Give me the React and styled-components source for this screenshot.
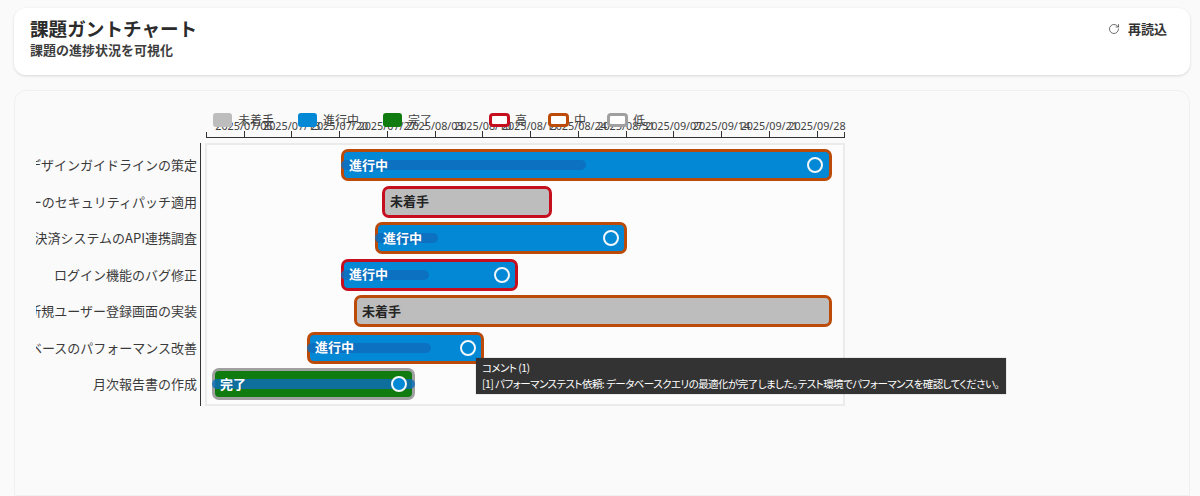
import styled, { createGlobalStyle } from 'styled-components'
import { RotateCw } from 'lucide-react'

const JP = `'Noto Sans CJK JP', 'Noto Sans', sans-serif`

const GlobalStyle = createGlobalStyle`
    html, body {
        margin: 0;
        height: 100%;
        overflow: hidden;
        background: #fafafa;
        font-family: ${JP};
        color: #242424;
    }
`

const Page = styled.div`
    height: 496px;
    padding: 8px 10px 0 14px;
    box-sizing: border-box;
    display: flex;
    flex-direction: column;
    gap: 15px;
`

const Header = styled.header`
    flex: 0 0 67px;
    box-sizing: border-box;
    display: flex;
    justify-content: space-between;
    padding: 8px 23px 0 16px;
    background: #fff;
    border-radius: 12px;
    box-shadow: 0 1px 3px rgba(0, 0, 0, 0.14);
`

const Title = styled.h1`
    margin: 0;
    font-size: 18.6px;
    line-height: 24px;
    font-weight: 700;
    color: #2b2b2b;
`

const Subtitle = styled.p`
    margin: 1px 0 0;
    font-size: 13px;
    line-height: 18px;
    font-weight: 700;
    color: #3d3d3d;
`

const ReloadButton = styled.button`
    align-self: flex-start;
    display: flex;
    align-items: center;
    gap: 8px;
    height: 26px;
    padding: 0 0 2px;
    border: 0;
    background: none;
    font-family: ${JP};
    font-size: 13px;
    font-weight: 700;
    color: #333;

    svg {
        margin-top: 2px;
    }
`

const ChartCard = styled.section`
    flex: 1;
    position: relative;
    box-sizing: border-box;
    padding: 27px 0 0 21px;
    border: 1px solid #f0f0f0;
    border-radius: 12px 12px 0 0;
    background: #fafafa;
`

const Legend = styled.div`
    position: absolute;
    top: 21px;
    left: 198px;
    display: flex;
    align-items: center;
    font-size: 12px;
    line-height: 16px;
    color: #424242;
`

const LegendGroup = styled.div`
    display: flex;
    gap: ${p => p.$gap}px;
    margin-right: ${p => p.$after || 0}px;
`

const LegendItem = styled.div`
    display: flex;
    align-items: center;
    gap: ${p => p.$gap}px;
`

const StatusSwatch = styled.span`
    width: 19px;
    height: 14px;
    border-radius: 3px;
    background: ${p => p.$color};
`

const PrioritySwatch = styled.span`
    width: 21px;
    height: 14px;
    box-sizing: border-box;
    border: 3px solid ${p => p.$color};
    border-radius: 4px;
    background: #fff;
`

const Axis = styled.div`
    margin: 0 0 5px 170px;
    width: 639px;
    height: 20px;
    box-sizing: border-box;
    padding-left: 37px;
    display: flex;
    gap: 47.75px;
    border-style: solid;
    border-width: 0 1px 1px;
    border-image: linear-gradient(to bottom, transparent 70%, #333 70%) 1;
`

const Tick = styled.div`
    width: 0;
    height: 19px;
    display: flex;
    flex-direction: column;
    align-items: center;
    justify-content: flex-end;
    flex: none;
`

const TickLabel = styled.span`
    font-family: 'Noto Sans', sans-serif;
    font-size: 10.8px;
    line-height: 13px;
    color: #424242;
    white-space: nowrap;
`

const TickMark = styled.span`
    flex: none;
    width: 1px;
    height: 6px;
    margin-top: -1px;
    background: #333;
`

const ChartBody = styled.div`
    display: flex;
`

const LabelColumn = styled.div`
    width: 165px;
    height: 263px;
    box-sizing: border-box;
    padding: 4px 0 0;
    margin-right: 4px;
    border-right: 1px solid #333;
`

const RowLabel = styled.div`
    height: 36.5px;
    width: 161px;
    box-sizing: border-box;
    padding-bottom: 1px;
    display: flex;
    align-items: center;
    justify-content: flex-end;
    overflow: hidden;
    white-space: nowrap;
    font-size: 13px;
    color: #3a3a3a;
`

const Plot = styled.div`
    width: 640px;
    height: 263px;
    box-sizing: border-box;
    padding-top: 2px;
    border: 2px solid #ebebeb;
    background: #fcfcfc;
`

const Row = styled.div`
    height: 36.5px;
    display: flex;
    align-items: center;
`

const Bar = styled.div`
    position: relative;
    flex: none;
    box-sizing: border-box;
    height: 32px;
    margin-left: ${p => p.$left}px;
    width: ${p => p.$width}px;
    display: flex;
    align-items: center;
    padding: 0 0 2px 5px;
    border: 3px solid ${p => p.$priority};
    border-radius: 7px;
    background: ${p => p.$fill};
    font-size: 13px;
    font-weight: 700;
    color: ${p => p.$text};
`

const Progress = styled.span`
    position: absolute;
    left: -3px;
    top: 8px;
    height: 10px;
    border-radius: 5px;
    background: rgba(15, 108, 189, 0.82);
`

const BarText = styled.span`
    position: relative;
`

const Handle = styled.span`
    position: absolute;
    top: 5px;
    width: 16px;
    height: 16px;
    box-sizing: border-box;
    border: 2px solid #f4f8fb;
    border-radius: 50%;
    background: #0288d4;
`

const Tooltip = styled.div`
    position: absolute;
    left: 461px;
    top: 267px;
    width: 530px;
    height: 36px;
    box-sizing: border-box;
    padding: 2px 6px;
    background: #333;
    color: #fff;
    font-size: 10.5px;
    line-height: 16px;
    letter-spacing: -0.54px;
    white-space: nowrap;
    font-feature-settings: 'palt';
    box-shadow: 0 0 1px rgba(0, 0, 0, 0.4);
`

const dates = ['07/06', '07/13', '07/20', '07/27', '08/03', '08/10', '08/17', '08/24', '08/31', '09/07', '09/14', '09/21', '09/28']

const PRIORITY = { high: '#c50f1f', mid: '#bc4b09', low: '#a0a0a0' }
const STATUS = {
    todo: { label: '未着手', fill: '#bdbdbd', text: '#242424' },
    doing: { label: '進行中', fill: '#0288d4', text: '#fff' },
    done: { label: '完了', fill: '#107c10', text: '#fff' },
}

// x is measured from the inside of the plot border
const tasks = [
    { name: 'デザインガイドラインの策定', x: 134, w: 491, status: 'doing', priority: 'mid', progress: 245, handle: 463 },
    { name: 'サーバーのセキュリティパッチ適用', x: 175, w: 170, status: 'todo', priority: 'high' },
    { name: '決済システムのAPI連携調査', x: 168, w: 252, status: 'doing', priority: 'mid', progress: 63, handle: 225 },
    { name: 'ログイン機能のバグ修正', x: 134, w: 177, status: 'doing', priority: 'high', progress: 88, handle: 150 },
    { name: '新規ユーザー登録画面の実装', x: 147, w: 478, status: 'todo', priority: 'mid' },
    { name: 'データベースのパフォーマンス改善', x: 100, w: 177, status: 'doing', priority: 'mid', progress: 124, handle: 150 },
    { name: '月次報告書の作成', x: 5, w: 203, status: 'done', priority: 'low', progress: 203, handle: 176 },
]

export default function App() {
    return (
        <>
            <GlobalStyle />
            <Page>
                <Header>
                    <div>
                        <Title>課題ガントチャート</Title>
                        <Subtitle>課題の進捗状況を可視化</Subtitle>
                    </div>
                    <ReloadButton>
                        <RotateCw size={12} strokeWidth={1.5} color="#424242" />
                        再読込
                    </ReloadButton>
                </Header>
                <ChartCard>
                    <Axis>
                        {dates.map(d => (
                            <Tick key={d}>
                                <TickLabel>2025/{d}</TickLabel>
                                <TickMark />
                            </Tick>
                        ))}
                    </Axis>
                    <Legend>
                        <LegendGroup $gap={24} $after={57}>
                            {Object.values(STATUS).map(s => (
                                <LegendItem key={s.label} $gap={6}>
                                    <StatusSwatch $color={s.fill} />
                                    {s.label}
                                </LegendItem>
                            ))}
                        </LegendGroup>
                        <LegendGroup $gap={21}>
                            <LegendItem $gap={5}><PrioritySwatch $color={PRIORITY.high} />高</LegendItem>
                            <LegendItem $gap={5}><PrioritySwatch $color={PRIORITY.mid} />中</LegendItem>
                            <LegendItem $gap={5}><PrioritySwatch $color={PRIORITY.low} />低</LegendItem>
                        </LegendGroup>
                    </Legend>
                    <ChartBody>
                        <LabelColumn>
                            {tasks.map(t => <RowLabel key={t.name}>{t.name}</RowLabel>)}
                        </LabelColumn>
                        <Plot>
                            {tasks.map(t => {
                                const s = STATUS[t.status]
                                return (
                                    <Row key={t.name}>
                                        <Bar $left={t.x} $width={t.w} $priority={PRIORITY[t.priority]} $fill={s.fill} $text={s.text}>
                                            {t.progress && <Progress style={{ width: t.progress }} />}
                                            <BarText>{s.label}</BarText>
                                            {t.handle && <Handle style={{ left: t.handle }} />}
                                        </Bar>
                                    </Row>
                                )
                            })}
                        </Plot>
                    </ChartBody>
                    <Tooltip>
                        <div>コメント (1)</div>
                        <div>[1] パフォーマンステスト依頼: データベースクエリの最適化が完了しました。テスト環境でパフォーマンスを確認してください。</div>
                    </Tooltip>
                </ChartCard>
            </Page>
        </>
    )
}
